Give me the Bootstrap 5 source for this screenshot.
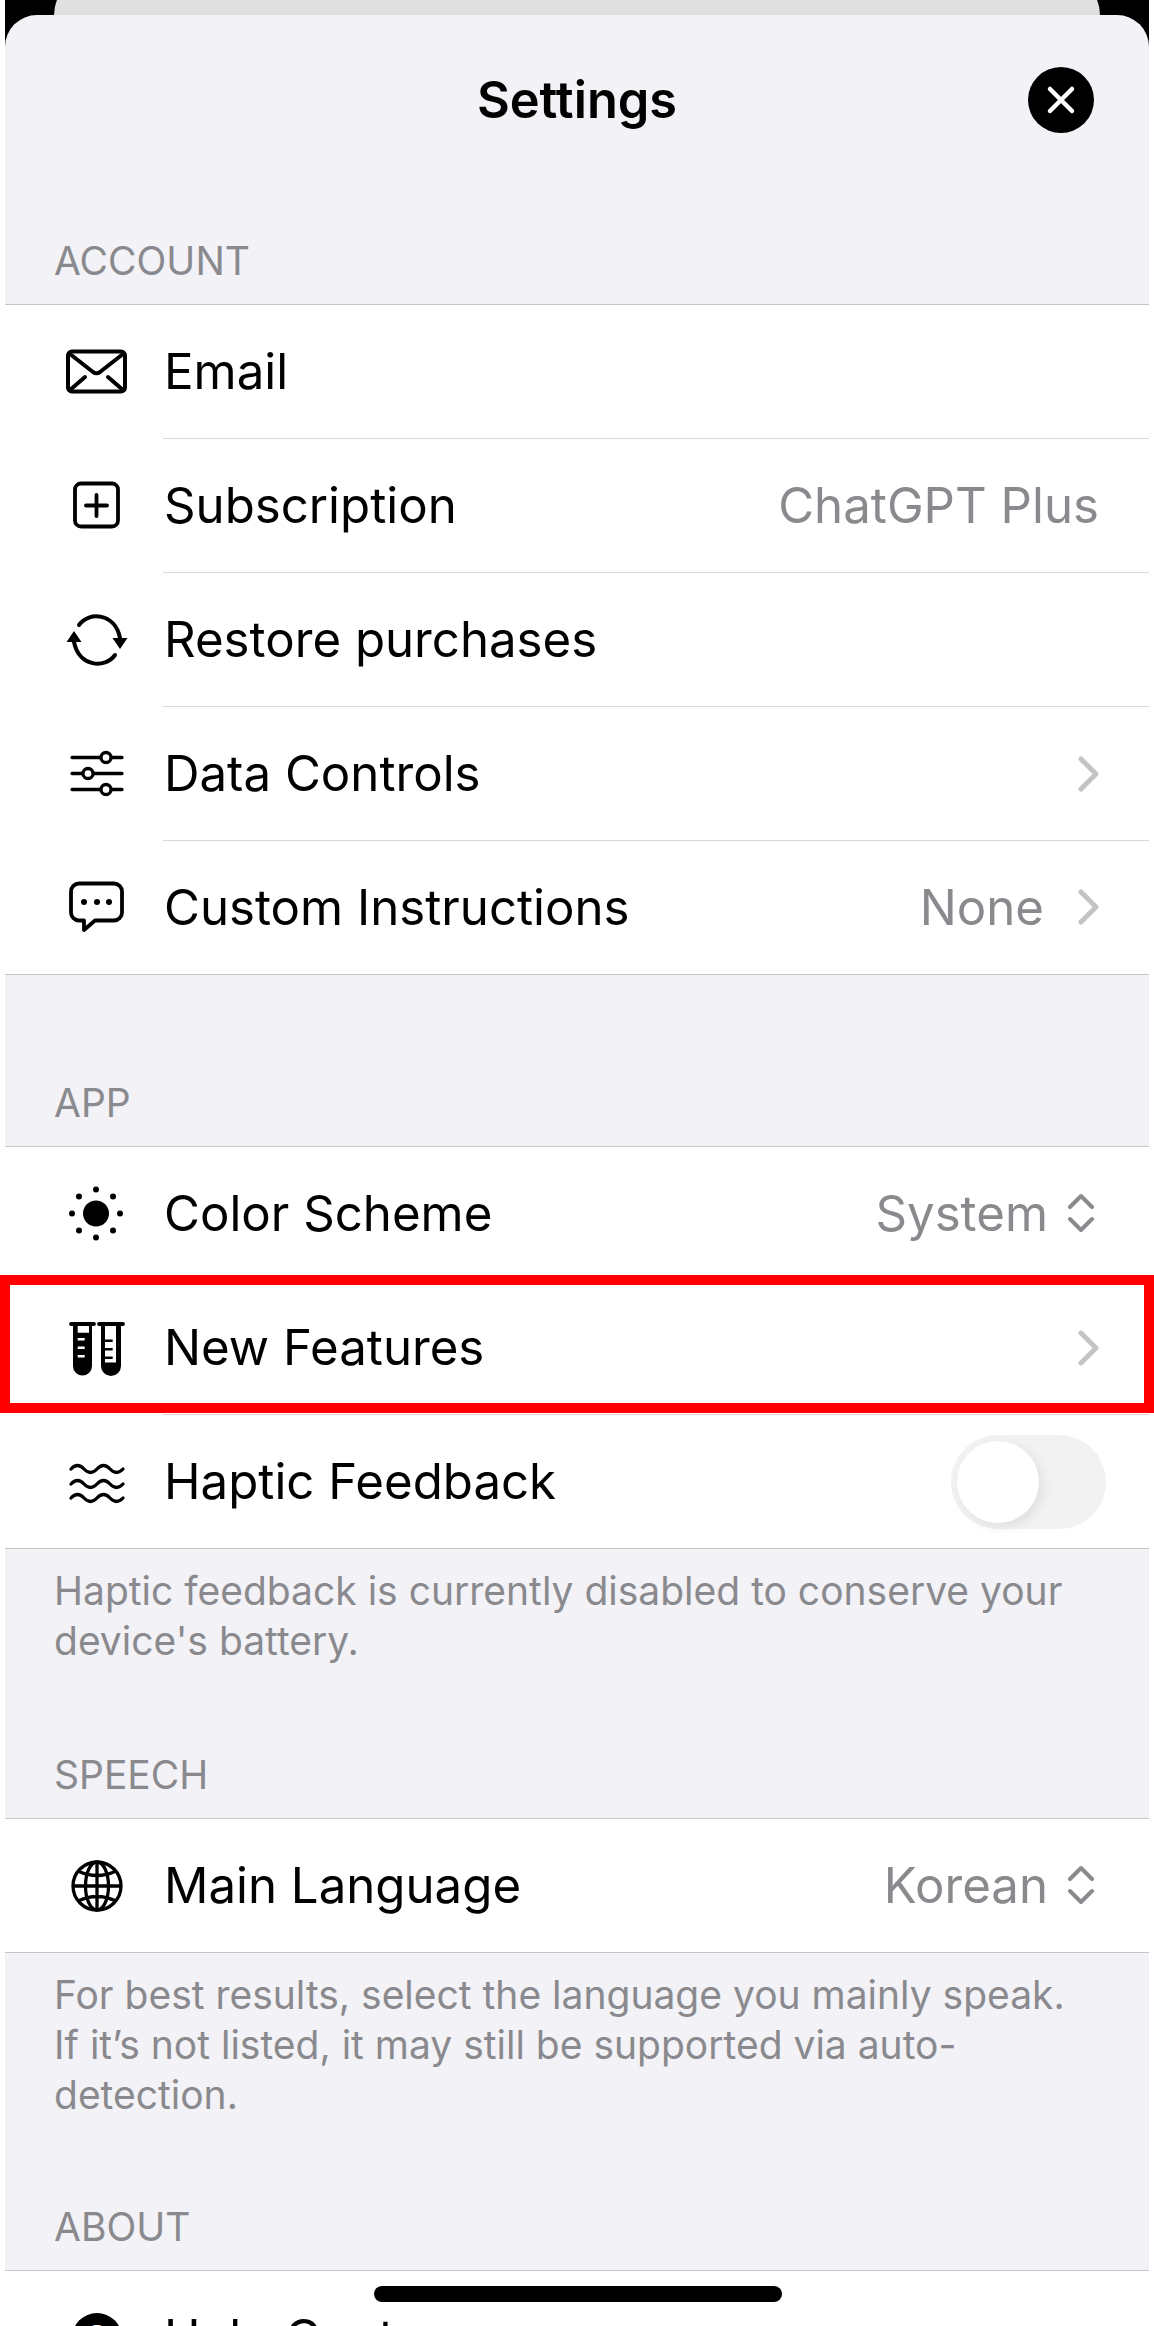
<!DOCTYPE html>
<html lang="en">
<head>
  <meta charset="UTF-8">
  <meta name="viewport" content="width=device-width, initial-scale=1">
  <title>Settings</title>
  <link href="https://cdn.jsdelivr.net/npm/bootstrap@5.3.0/dist/css/bootstrap.min.css" rel="stylesheet">
  <style>
    html, body {
      height: 100%;
      overflow: hidden;
    }
    body {
      font-family: Inter, "Liberation Sans", sans-serif;
      background-color: #fff;
      color: #000;
    }
    .stage {
      margin: 0 5px;
      height: 100%;
      position: relative;
    }
    .back-sheet {
      height: 90px;
      margin: -25px 49px 0;
      background: #e0e0e0;
      border-radius: 40px;
    }
    .stage-top {
      height: 65px;
      background: #000;
      overflow: hidden;
    }
    .sheet {
      background: #f2f2f7;
      border-radius: 32px 32px 0 0;
      margin-top: -50px;
      height: 2400px;
      position: relative;
    }
    .sheet-head {
      display: grid;
      grid-template-columns: 1fr auto 1fr;
      align-items: center;
      padding: 52px 55px 104px;
    }
    .sheet-title {
      grid-column: 2;
      font-size: 50.5px;
      font-weight: 600;
      line-height: 66px;
      margin: 0;
    }
    .close-btn {
      grid-column: 3;
      justify-self: end;
      width: 66px;
      height: 66px;
      border-radius: 50%;
      background: #000;
      border: 0;
      padding: 0;
    }
    .sec-label {
      font-size: 39px;
      line-height: 48px;
      color: #8a8a8e;
      padding: 0 49px 19px;
      text-transform: uppercase;
    }
    .group {
      border-top: 1px solid #c6c6c8;
      border-bottom: 1px solid #c6c6c8;
      border-radius: 0;
      overflow: visible;
    }
    .group .list-group-item {
      background: #fff;
      border: 0;
      padding: 0;
      display: flex;
      align-items: center;
      height: 133px;
      font-size: 49.2px;
      color: #000;
    }
    .group .list-group-item:not(:last-child) {
      height: 134px;
    }
    .row-icon {
      flex: none;
      width: 64px;
      height: 64px;
      margin: 0 34px 0 60px;
    }
    .row-body {
      flex: 1;
      height: 100%;
      display: flex;
      align-items: center;
      justify-content: space-between;
      padding-left: 1px;
      padding-right: 50px;
      min-width: 0;
    }
    .list-group-item:not(:last-child) .row-body {
      border-bottom: 1px solid #d8d8da;
    }
    .row-value {
      color: #8a8a8e;
      display: flex;
      align-items: center;
    }
    .chev {
      width: 21px;
      height: 36px;
      margin-left: 34px;
    }
    .updown {
      width: 26px;
      height: 40px;
      margin: 0 5px 0 20px;
    }
    .group .flagged::after {
      content: "";
      position: absolute;
      top: -6px;
      left: -5px;
      right: -5px;
      height: 138px;
      border: 10px solid #f00;
      z-index: 2;
      pointer-events: none;
    }
    .toggle-off {
      width: 155px;
      height: 94px;
      border-radius: 47px;
      background: #f2f2f3;
      position: relative;
      margin-right: -7px;
    }
    .toggle-off::after {
      content: "";
      position: absolute;
      top: 6px;
      left: 6px;
      width: 82px;
      height: 82px;
      border-radius: 50%;
      background: #fff;
      box-shadow: 4px 4px 12px rgba(0,0,0,0.08);
    }
    .sec-note {
      font-size: 39px;
      line-height: 50px;
      color: #8a8a8e;
      padding: 17px 49px 0;
    }
    .gap-app { margin-top: 104px; }
    .gap-speech { margin-top: 85px; }
    .gap-about { margin-top: 83px; }
    .help-dot {
      width: 50px;
      height: 50px;
      margin: 0 41px 0 67px;
      border-radius: 50%;
      background: #000;
      color: #fff;
      font-size: 36px;
      font-weight: 700;
      line-height: 50px;
      text-align: center;
      flex: none;
    }
    .home-bar {
      position: absolute;
      top: 2286px;
      left: 369px;
      width: 408px;
      height: 16px;
      border-radius: 8px;
      background: #000;
      z-index: 3;
    }
  </style>
</head>
<body>
  <div class="stage">
    <div class="stage-top">
      <div class="back-sheet"></div>
    </div>
    <div class="sheet">
      <div class="sheet-head">
        <h1 class="sheet-title text-center">Settings</h1>
        <button class="close-btn d-flex align-items-center justify-content-center" type="button" aria-label="Close">
          <svg width="30" height="30" viewBox="0 0 30 30"><path d="M4 4l22 22M26 4L4 26" stroke="#fff" stroke-width="4.5" stroke-linecap="round" fill="none"/></svg>
        </button>
      </div>

      <div class="sec-label">Account</div>
      <ul class="list-group group">
        <li class="list-group-item">
          <svg class="row-icon" viewBox="0 0 64 64" fill="none" stroke="#000" stroke-width="4" stroke-linecap="round" stroke-linejoin="round"><rect x="3" y="11.500" width="57" height="40" rx="4"/><path d="M5 14l23 18q3.500 2.500 7 0l23-18M5 50l15-13M58 50L43 37"/></svg>
          <div class="row-body"><span>Email</span></div>
        </li>
        <li class="list-group-item">
          <svg class="row-icon" viewBox="0 0 64 64" fill="none" stroke="#000" stroke-width="3.800" stroke-linecap="round"><rect x="10" y="9.500" width="43" height="43" rx="6"/><path d="M21 31.500h21M31.500 21v21"/></svg>
          <div class="row-body"><span>Subscription</span><span class="row-value">ChatGPT Plus</span></div>
        </li>
        <li class="list-group-item">
          <svg class="row-icon" viewBox="0 0 64 64" fill="none" stroke="#000" stroke-width="4" stroke-linecap="round"><path d="M14 17C24 3 50 5 55 30M50 47C40 61 14 59 9 34"/><path d="M47.500 30h15L55 41zM1.500 34h15L9 23z" fill="#000" stroke="none"/></svg>
          <div class="row-body"><span>Restore purchases</span></div>
        </li>
        <li class="list-group-item">
          <svg class="row-icon" viewBox="0 0 64 64" fill="none" stroke="#000" stroke-width="3.300" stroke-linecap="round"><path d="M7 15.500h50M7 31.500h50M7 47.500h50"/><circle cx="41" cy="15.500" r="5" fill="#fff"/><circle cx="23" cy="31.500" r="5" fill="#fff"/><circle cx="41" cy="47.500" r="5" fill="#fff"/></svg>
          <div class="row-body"><span>Data Controls</span><span class="row-value"><svg class="chev" viewBox="0 0 21 36" fill="none" stroke="#c4c4c6" stroke-width="5" stroke-linecap="round" stroke-linejoin="round"><path d="M3 3l15 15L3 33"/></svg></span></div>
        </li>
        <li class="list-group-item">
          <svg class="row-icon" viewBox="0 0 64 64" fill="none" stroke="#000" stroke-width="3.800" stroke-linejoin="round"><path d="M14 7.500h35a8 8 0 0 1 8 8v21a8 8 0 0 1-8 8H30L19 54v-9.500h-5a8 8 0 0 1-8-8v-21a8 8 0 0 1 8-8z"/><circle cx="19" cy="26" r="3" fill="#000" stroke="none"/><circle cx="32" cy="26" r="3" fill="#000" stroke="none"/><circle cx="44" cy="26" r="3" fill="#000" stroke="none"/></svg>
          <div class="row-body"><span>Custom Instructions</span><span class="row-value">None<svg class="chev" viewBox="0 0 21 36" fill="none" stroke="#c4c4c6" stroke-width="5" stroke-linecap="round" stroke-linejoin="round"><path d="M3 3l15 15L3 33"/></svg></span></div>
        </li>
      </ul>

      <div class="sec-label gap-app">App</div>
      <ul class="list-group group">
        <li class="list-group-item">
          <svg class="row-icon" viewBox="0 0 64 64" fill="#000"><circle cx="31" cy="31.500" r="13"/><circle cx="31" cy="7.500" r="3"/><circle cx="31" cy="55.500" r="3"/><circle cx="7" cy="31.500" r="3"/><circle cx="55" cy="31.500" r="3"/><circle cx="14" cy="14.500" r="3"/><circle cx="48" cy="14.500" r="3"/><circle cx="14" cy="48.500" r="3"/><circle cx="48" cy="48.500" r="3"/></svg>
          <div class="row-body"><span>Color Scheme</span><span class="row-value">System<svg class="updown" viewBox="0 0 26 40" fill="none" stroke="#8a8a8e" stroke-width="4" stroke-linecap="round" stroke-linejoin="round"><path d="M2 14L13 3l11 11M2 26l11 11 11-11"/></svg></span></div>
        </li>
        <li class="list-group-item position-relative flagged">
          <svg class="row-icon" viewBox="0 0 64 64"><path d="M8 9h19v41a9.500 9.500 0 0 1-19 0z" fill="#000"/><path d="M6 8h23M34 8h24" stroke="#000" stroke-width="3.800" stroke-linecap="round"/><path d="M12.700 10H24v6.700H12.700zM12.700 22h7v2.500h-7zM12.700 30.500h7V33h-7zM12.700 39h7v2.500h-7z" fill="#fff"/><path d="M36 9h20v41a10 10 0 0 1-20 0z" fill="#000"/><path d="M40 10h11v36.500H40z" fill="#fff"/><path d="M40 23.500h7.700V26H40zM40 32h7.700v2.500H40zM40 40.500h7.700V43H40z" fill="#000"/></svg>
          <div class="row-body"><span>New Features</span><span class="row-value"><svg class="chev" viewBox="0 0 21 36" fill="none" stroke="#c4c4c6" stroke-width="5" stroke-linecap="round" stroke-linejoin="round"><path d="M3 3l15 15L3 33"/></svg></span></div>
        </li>
        <li class="list-group-item">
          <svg class="row-icon" viewBox="0 0 64 64" fill="none" stroke="#000" stroke-width="3.300" stroke-linecap="round"><path d="M6 19q6.500-7 13 0t13 0t13 0t13 0M6 34q6.500-7 13 0t13 0t13 0t13 0M6 48q6.500-7 13 0t13 0t13 0t13 0"/></svg>
          <div class="row-body"><span>Haptic Feedback</span><span class="toggle-off" role="switch" aria-checked="false"></span></div>
        </li>
      </ul>
      <div class="sec-note">Haptic feedback is currently disabled to conserve your<br>device's battery.</div>

      <div class="sec-label gap-speech">Speech</div>
      <ul class="list-group group">
        <li class="list-group-item">
          <svg class="row-icon" viewBox="0 0 64 64" fill="none" stroke="#000" stroke-width="3.300"><circle cx="32" cy="32" r="24"/><ellipse cx="32" cy="32" rx="11.500" ry="24"/><path d="M32 8v48M8 32h48M13 17q19 9 38 0M13 47q19-9 38 0"/></svg>
          <div class="row-body"><span>Main Language</span><span class="row-value">Korean<svg class="updown" viewBox="0 0 26 40" fill="none" stroke="#8a8a8e" stroke-width="4" stroke-linecap="round" stroke-linejoin="round"><path d="M2 14L13 3l11 11M2 26l11 11 11-11"/></svg></span></div>
        </li>
      </ul>
      <div class="sec-note">For best results, select the language you mainly speak.<br>If it’s not listed, it may still be supported via auto-<br>detection.</div>

      <div class="sec-label gap-about">About</div>
      <ul class="list-group group">
        <li class="list-group-item">
          <span class="help-dot">?</span>
          <div class="row-body"><span>Help Center</span></div>
        </li>
      </ul>
    </div>
    <div class="home-bar"></div>
  </div>
  <script src="https://cdn.jsdelivr.net/npm/bootstrap@5.3.0/dist/js/bootstrap.bundle.min.js"></script>
</body>
</html>
